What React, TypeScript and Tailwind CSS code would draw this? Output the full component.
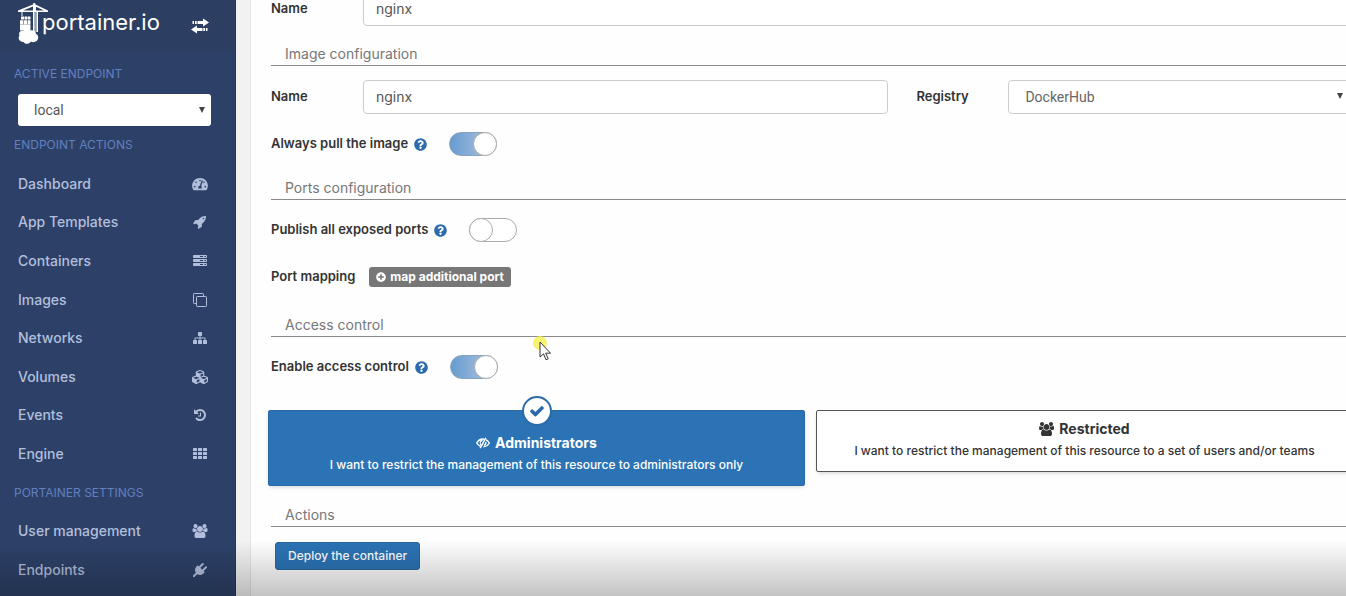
import React, { useState } from "react";
import {
  FaCubes,
  FaPlusCircle,
  FaQuestionCircle,
  FaTachometerAlt,
} from "react-icons/fa";

interface IconProps {
  className?: string;
}

const RocketIcon: React.FC<IconProps> = ({ className }) => (
  <svg viewBox="0 0 1792 1792" className={className} fill="currentColor" aria-hidden="true">
    <path d="M1440 448q0-40-28-68t-68-28-68 28-28 68 28 68 68 28 68-28 28-68zm224-288q0 249-75.5 430.5t-253.5 360.5q-81 80-195 176l-20 379q-2 16-16 26l-384 224q-7 4-16 4-12 0-23-9l-64-64q-13-14-8-32l85-276-281-281-276 85q-3 1-9 1-14 0-23-9l-64-64q-17-19-5-39l224-384q10-14 26-16l379-20q96-114 176-195 188-187 358-258t431-71q14 0 24 9.500t10 22.500z" />
  </svg>
);

const UsersIcon: React.FC<IconProps> = ({ className }) => (
  <svg viewBox="-64 0 1920 1792" className={className} fill="currentColor" aria-hidden="true">
    <path d="M529 896q-162 5-265 128h-134q-82 0-138-40.5t-56-118.5q0-353 124-353 6 0 43.5 21t97.5 42.5 119 21.5q67 0 133-23-5 37-5 66 0 159 93 293zm1071 637q0 120-73 189.5t-194 69.5h-874q-121 0-194-69.5t-73-189.5q0-53 3.5-103.5t14-109 26.5-108.5 43-97.5 62-81 85.5-53.5 111.5-20q10 0 43 21.5t73 48 107 48 135 21.5 135-21.5 107-48 73-48 43-21.5q61 0 111.5 20t85.5 53.5 62 81 43 97.5 26.5 108.5 14 109 3.5 103.5zm-1024-1277q0 106-75 181t-181 75-181-75-75-181 75-181 181-75 181 75 75 181zm704 384q0 159-112.5 271.5t-271.5 112.5-271.5-112.5-112.5-271.5 112.5-271.5 271.5-112.5 271.5 112.5 112.5 271.5zm576 225q0 78-56 118.5t-138 40.5h-134q-103-123-265-128 93-134 93-293 0-29-5-66 66 23 133 23 59 0 119-21.5t97.5-42.5 43.5-21q124 0 124 353zm-128-609q0 106-75 181t-181 75-181-75-75-181 75-181 181-75 181 75 75 181z" />
  </svg>
);

const PlugIcon: React.FC<IconProps> = ({ className }) => (
  <svg viewBox="0 0 1792 1792" className={className} fill="currentColor" aria-hidden="true">
    <path d="M1755 453q37 38 37 90.5t-37 90.5l-401 400 150 150-160 160q-163 163-389.5 186.5t-411.5-100.5l-362 362h-181v-181l362-362q-124-185-100.5-411.5t186.5-389.5l160-160 150 150 400-401q38-37 91-37t90 37 37 90.5-37 90.5l-400 401 234 234 401-400q38-37 91-37t90 37z" />
  </svg>
);

const HistoryIcon: React.FC<IconProps> = ({ className }) => (
  <svg viewBox="0 0 1792 1792" className={className} fill="currentColor" aria-hidden="true">
    <path d="M1664 896q0 156-61 298t-164 245-245 164-298 61q-172 0-327-72.5t-264-204.5q-7-10-6.5-22.5t8.5-20.5l137-138q10-9 25-9 16 2 23 12 73 95 179 147t225 52q104 0 198.5-40.5t163.5-109.5 109.5-163.5 40.5-198.5-40.5-198.5-109.5-163.5-163.5-109.5-198.5-40.5q-98 0-188 35.5t-160 101.5l137 138q31 30 14 69-17 40-59 40h-448q-26 0-45-19t-19-45v-448q0-42 40-59 39-17 69 14l130 129q107-101 244.5-156.5t284.5-55.5q156 0 298 61t245 164 164 245 61 298zm-640-288v448q0 14-9 23t-23 9h-320q-14 0-23-9t-9-23v-64q0-14 9-23t23-9h224v-352q0-14 9-23t23-9h64q14 0 23 9t9 23z" />
  </svg>
);

const SitemapIcon: React.FC<IconProps> = ({ className }) => (
  <svg viewBox="0 0 1792 1792" className={className} fill="currentColor" aria-hidden="true">
    <path d="M1792 1248v320q0 40-28 68t-68 28h-320q-40 0-68-28t-28-68v-320q0-40 28-68t68-28h96v-192h-512v192h96q40 0 68 28t28 68v320q0 40-28 68t-68 28h-320q-40 0-68-28t-28-68v-320q0-40 28-68t68-28h96v-192h-512v192h96q40 0 68 28t28 68v320q0 40-28 68t-68 28h-320q-40 0-68-28t-28-68v-320q0-40 28-68t68-28h96v-192q0-52 38-90t90-38h512v-192h-96q-40 0-68-28t-28-68v-320q0-40 28-68t68-28h320q40 0 68 28t28 68v320q0 40-28 68t-68 28h-96v192h512q52 0 90 38t38 90v192h96q40 0 68 28t28 68z" />
  </svg>
);

const CheckIcon: React.FC<IconProps> = ({ className }) => (
  <svg viewBox="0 0 1792 1792" className={className} fill="currentColor" aria-hidden="true">
    <path d="M1671 566q0 40-28 68l-724 724-136 136q-28 28-68 28t-68-28l-136-136-362-362q-28-28-28-68t28-68l136-136q28-28 68-28t68 28l294 295 656-657q28-28 68-28t68 28l136 136q28 28 28 68z" />
  </svg>
);

const ServerIcon: React.FC<IconProps> = ({ className }) => (
  <svg viewBox="0 0 14 14" className={className} aria-hidden="true">
    {[1, 5, 9].map((y) => (
      <g key={y} fill="none" stroke="currentColor">
        <path d={`M0.5 ${y + 0.5}h13v2h-13z`} />
        <path d={`M1 ${y + 1.5}h6M10 ${y + 1.5}h1.5`} />
      </g>
    ))}
  </svg>
);

const CloneIcon: React.FC<IconProps> = ({ className }) => (
  <svg viewBox="0 0 14 14" className={className} fill="none" stroke="currentColor" aria-hidden="true">
    <rect x="3.5" y="3.5" width="10" height="10" rx="0.8" />
    <path d="M10.5 3.5v-2.2a.8.8 0 0 0-.8-.8H1.3a.8.8 0 0 0-.8.8v8.4a.8.8 0 0 0 .8.8h2.2" />
  </svg>
);

const GridIcon: React.FC<IconProps> = ({ className }) => (
  <svg viewBox="0 0 14 14" className={className} fill="currentColor" aria-hidden="true">
    {[1, 5, 9].map((y) =>
      [0, 5, 10].map((x) => (
        <rect key={`${x}-${y}`} x={x} y={y} width="4" height="3" rx="0.5" />
      ))
    )}
  </svg>
);

const EyeSlashIcon: React.FC<IconProps> = ({ className }) => (
  <svg viewBox="0 0 14 12" className={className} fill="none" stroke="currentColor" aria-hidden="true">
    <path d="M8 2.2C4.8 1.5 2.2 3.5.7 6c.9 1.5 2.2 2.7 3.8 3.4M9.800 2.700c1.500.7 2.700 1.900 3.500 3.300-1.300 2.200-3.400 3.700-6 3.900" strokeWidth="1.4" />
    <path d="M4.200 5.600c.1-1.400 1.200-2.200 2.400-2.300M4.300 6.400c.1.800.5 1.500 1.200 1.900M9.700 5c.4 1.500-.3 2.800-1.800 3.400" strokeWidth="1.400" />
    <path d="M9.800.8 4.200 11.200" strokeWidth="1.400" />
  </svg>
);

const TransferIcon: React.FC<IconProps> = ({ className }) => (
  <svg viewBox="0 0 18 16" className={className} fill="currentColor" aria-hidden="true">
    <path d="M12 0.5 18 4.5 12 8.5V6H6.5V3H12zM4 3h1.700v3H4zM1.500 3h1.500v3H1.500z" />
    <path d="M6 7.5 0 11.5 6 15.5V13h5.500v-3H6zM12.300 10H14v3h-1.700zM14.900 10h1.600v3h-1.600z" />
  </svg>
);

const Logo: React.FC = () => (
  <div className="flex items-start text-white">
    <svg viewBox="0 0 30 44" className="h-11 w-[30px]" fill="currentColor" aria-hidden="true">
      {/* crane */}
      <path d="M0 10.500 15 4.500 15.500 3h1.500l.5 1.500L30 10.500V12H0zM5 10.500h10V6.500zM18 10.500h8L18 6.700z" fillRule="evenodd" />
      <path d="M15 12h1.500v22H15zM18.500 12H20v20h-1.500zM3.500 12h1v4h-1z" />
      <path d="M17.500 12v20" stroke="currentColor" strokeWidth="2" opacity="0.5" fill="none" />
      {/* containers */}
      <path d="M3 16.500h3v3H3zM6.500 16.500H9v3H6.500zM9.500 16.500h3v3h-3zM2 20.200h3.500v4H2zM6 20.200h3v4H6zM9.500 20.200h3v4h-3zM2 24.500h10.500v6H2z" />
      {/* whale cloud */}
      <path d="M3.500 41.500C.5 40.500 0 37 1.500 35.500 0 32.500 3 30 5 31c2-3 6-2.500 7.500-.5 3-.8 5.500 1 5.500 3.500 3 1 3 6-.5 7.500-1.500 1-3.500.8-4.500 0-2 3-6 3-7.500.5-.7.200-1.500 0-2-.5z" />
    </svg>
    <span className="-ml-1.5 mt-1.5 text-[22px] leading-8 font-normal">portainer.io</span>
  </div>
);

interface MenuItem {
  label: string;
  icon?: React.ReactNode;
}

const iconClass = "h-[14px] w-4";

const menu: MenuItem[] = [
  { label: "ENDPOINT ACTIONS" },
  { label: "Dashboard", icon: <FaTachometerAlt className={iconClass} /> },
  { label: "App Templates", icon: <RocketIcon className={iconClass} /> },
  { label: "Containers", icon: <ServerIcon className={iconClass} /> },
  { label: "Images", icon: <CloneIcon className={iconClass} /> },
  { label: "Networks", icon: <SitemapIcon className={iconClass} /> },
  { label: "Volumes", icon: <FaCubes className="h-4 w-4" /> },
  { label: "Events", icon: <HistoryIcon className={iconClass} /> },
  { label: "Engine", icon: <GridIcon className={iconClass} /> },
  { label: "PORTAINER SETTINGS" },
  { label: "User management", icon: <UsersIcon className={iconClass} /> },
  { label: "Endpoints", icon: <PlugIcon className={iconClass} /> },
];

const Sidebar: React.FC = () => (
  <aside className="w-[236px] shrink-0 bg-[#2d4168] border-r border-[#26375a]">
    <div className="flex h-[53px] items-start justify-between bg-[#2c3e62] pl-[18px] pr-[26px]">
      <Logo />
      <button type="button" aria-label="Toggle sidebar" className="mt-[18px] text-white">
        <TransferIcon className="h-4 w-[18px]" />
      </button>
    </div>
    <label htmlFor="endpoint" className="block pt-3 pb-3 pl-[14px] text-xs leading-[17px] text-[#627fbf]">
      ACTIVE ENDPOINT
    </label>
    <div className="relative ml-[18px] mr-6">
      <select
        id="endpoint"
        className="h-8 w-full appearance-none rounded-[3px] bg-white pl-4 font-['Roboto',sans-serif] text-sm text-[#555]"
      >
        <option>local</option>
      </select>
      <Caret className="right-[6px]" />
    </div>
    <ul className="grid h-[463px] auto-rows-fr">
      {menu.map((item) =>
        item.icon ? (
          <li key={item.label}>
            <a
              href="#"
              className="flex h-full items-center justify-between pl-[18px] pr-[27px] text-sm font-medium text-[#b2bfdc]"
            >
              {item.label}
              {item.icon}
            </a>
          </li>
        ) : (
          <li key={item.label} className="flex items-center pl-[14px] text-xs text-[#627fbf]">
            {item.label}
          </li>
        )
      )}
    </ul>
  </aside>
);

const Caret: React.FC<{ className: string }> = ({ className }) => (
  <svg
    viewBox="0 0 6 6"
    className={`pointer-events-none absolute top-[13px] h-1.5 w-1.5 ${className}`}
    aria-hidden="true"
  >
    <path d="M0 0h6L3 6z" fill="#444" />
  </svg>
);

const SectionTitle: React.FC<{ className: string; children: React.ReactNode }> = ({
  className,
  children,
}) => (
  <h2
    className={`ml-[3px] h-[23px] border-b border-[#8a8a8a] pl-[14px] text-sm leading-[22px] text-[#777] ${className}`}
  >
    {children}
  </h2>
);

interface SwitchRowProps {
  id: string;
  label: string;
  defaultChecked?: boolean;
  className: string;
}

const SwitchRow: React.FC<SwitchRowProps> = ({ id, label, defaultChecked, className }) => (
  <div className={`ml-[3px] flex h-6 items-center ${className}`}>
    <label htmlFor={id} className="text-[13px] font-semibold text-[#333]">
      {label}
    </label>
    <FaQuestionCircle className="ml-1.5 h-[13px] w-[13px] text-[#2c6cac]" />
    <input
      id={id}
      type="checkbox"
      role="switch"
      defaultChecked={defaultChecked}
      className="ml-[22px] h-6 w-12 appearance-none rounded-full border border-[#aaa] bg-white before:-mt-px before:-ml-px before:block before:h-6 before:w-6 before:rounded-full before:border before:border-[#aaa] before:bg-white checked:border-[#8aa3bd] checked:bg-linear-to-r checked:from-[#659ccf] checked:to-[#b7c8df] checked:before:ml-[23px]"
    />
  </div>
);

const inputClass =
  "block h-[34px] w-full rounded-[4px] border border-[#ccc] bg-white px-3 pb-0.5 text-sm text-[#555]";
const labelClass = "shrink-0 text-[13px] font-semibold text-[#333]";

const ContainerForm: React.FC = () => {
  const [access, setAccess] = useState("admin");

  return (
    <form className="-mt-2 -mr-[7px]" onSubmit={(e) => e.preventDefault()}>
      <div className="ml-[3px] flex items-center">
        <label htmlFor="name" className={`w-[92px] ${labelClass}`}>
          Name
        </label>
        <input id="name" defaultValue="nginx" className={inputClass} />
      </div>

      <SectionTitle className="mt-[17px]">Image configuration</SectionTitle>
      <div className="ml-[3px] mt-[14px] flex items-center">
        <label htmlFor="image" className={`w-[92px] ${labelClass}`}>
          Name
        </label>
        <div className="flex-[526]">
          <input id="image" defaultValue="nginx" className={inputClass} />
        </div>
        <label htmlFor="registry" className={`ml-7 w-[92px] ${labelClass}`}>
          Registry
        </label>
        <div className="relative flex-[345]">
          <select
            id="registry"
            className="h-[34px] w-full appearance-none rounded-[4px] border border-[#ccc] bg-white px-4 font-['Roboto',sans-serif] text-sm text-[#666]"
          >
            <option>DockerHub</option>
          </select>
          <Caret className="right-[10px]" />
        </div>
      </div>
      <SwitchRow id="pull" label="Always pull the image" defaultChecked className="mt-[18px]" />

      <SectionTitle className="mt-[21px]">Ports configuration</SectionTitle>
      <SwitchRow id="publish" label="Publish all exposed ports" className="mt-[18px]" />
      <div className="ml-[3px] mt-[25px] flex h-5 items-center">
        <span className={labelClass}>Port mapping</span>
        <button
          type="button"
          className="ml-[14px] flex h-5 items-center gap-1 rounded-[3px] bg-[#777] px-[7px] text-xs font-bold text-white"
        >
          <FaPlusCircle className="h-[10px] w-[10px]" />
          map additional port
        </button>
      </div>

      <SectionTitle className="mt-[27px]">Access control</SectionTitle>
      <SwitchRow id="access" label="Enable access control" defaultChecked className="mt-[18px]" />
      <div className="mt-[31px] grid grid-cols-2 items-start gap-[11px]">
        <AccessCard
          value="admin"
          title="Administrators"
          text="I want to restrict the management of this resource to administrators only"
          icon={<EyeSlashIcon className="h-3 w-[14px]" />}
          selected={access === "admin"}
          onSelect={setAccess}
        />
        <AccessCard
          value="restricted"
          title="Restricted"
          text="I want to restrict the management of this resource to a set of users and/or teams"
          icon={<UsersIcon className="h-[14px] w-[15px]" />}
          selected={access === "restricted"}
          onSelect={setAccess}
        />
      </div>

      <SectionTitle className="mt-[18px]">Actions</SectionTitle>
      <button
        type="submit"
        className="ml-[7px] mt-[15px] h-7 rounded-[3px] border border-[#2a659c] bg-[#2b73b5] px-3 text-xs font-medium text-white"
      >
        Deploy the container
      </button>
    </form>
  );
};

interface AccessCardProps {
  value: string;
  title: string;
  text: string;
  icon: React.ReactNode;
  selected: boolean;
  onSelect: (value: string) => void;
}

const AccessCard: React.FC<AccessCardProps> = ({ value, title, text, icon, selected, onSelect }) => (
  <label
    className={`relative block cursor-pointer rounded-[2px] border text-center shadow-[0_2px_5px_-2px_rgba(0,0,0,0.25)] ${
      selected
        ? "border-[#2a6aa6] bg-[#2b73b5] pt-[21px] pb-[9px] text-white"
        : "border-[#555] bg-white pt-[7px] pb-[9px] text-[#333]"
    }`}
  >
    <input
      type="radio"
      name="access-level"
      value={value}
      checked={selected}
      onChange={() => onSelect(value)}
      className="sr-only"
    />
    {selected && (
      <span className="absolute -top-[15px] left-1/2 flex h-[30px] w-[30px] -translate-x-1/2 items-center justify-center rounded-full border-2 border-[#2b6ba8] bg-white text-[#2b6bad]">
        <CheckIcon className="h-4 w-4" />
      </span>
    )}
    <span className="flex h-[22px] items-center justify-center gap-[5px] text-sm font-bold">
      {icon}
      {title}
    </span>
    <span className="block whitespace-nowrap text-xs leading-[22px] font-medium">{text}</span>
  </label>
);

const App: React.FC = () => (
  <div className="relative flex min-h-screen overflow-hidden bg-[#f1f2f1] font-['Inter',sans-serif]">
    <Sidebar />
    <main className="ml-[14px] min-w-0 flex-1 border-l border-[#e4e5e4] bg-[#fefefe] pl-[17px]">
      <ContainerForm />
    </main>

    {/* Mouse pointer with click highlight */}
    <svg
      viewBox="0 0 20 26"
      className="pointer-events-none absolute left-[532px] top-[336px] h-[26px] w-5"
      aria-hidden="true"
    >
      <circle cx="8" cy="7" r="7" fill="#f5ef4c" opacity="0.8" />
      <path d="M8 6v15l3.500-3.200 2.500 6 2.200-1-2.500-5.600H18.500z" fill="#fff" stroke="#333" />
    </svg>
    <div className="pointer-events-none absolute inset-x-0 bottom-0 h-14 bg-linear-to-b from-transparent to-black/23" />
  </div>
);

export default App;
